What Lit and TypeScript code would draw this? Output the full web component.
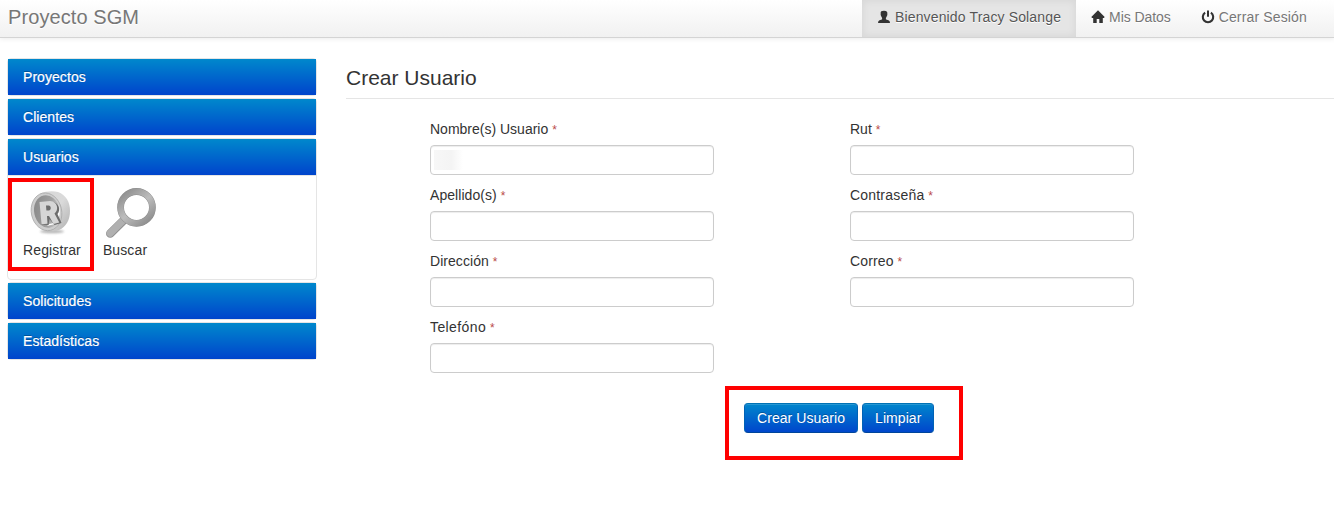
import { LitElement, html, css, svg } from "lit";
import { customElement } from "lit/decorators.js";
import { styleMap } from "lit/directives/style-map.js";

const userIcon = svg`<path fill="#333" d="M4.300 1.300Q5 .7 7 .7q2.300 0 2.900 1Q10.600 2.500 10.300 4q.3 1-.4 2Q9.500 7.300 8.900 7.900V9.200q.5.5 2.600 1.100Q13 10.900 13 13H1Q1 10.900 2.500 10.300q2.100-.6 2.600-1.100V7.900Q4.500 7.300 4.100 6 3.400 5 3.700 4 3.400 2 4.300 1.300z"/>`;
const homeIcon = svg`<path fill="#333" d="M7 .3 13.700 7 12.900 8H11.800v5H8.300V9H5.700v4H2.200V8H1.100L.3 7z"/>`;
const powerIcon = svg`<path fill="none" stroke="#333" stroke-width="2.100" d="M4.100 2.700A5.200 5.200 0 1 0 9.900 2.700"/><path fill="#333" d="M6 .6h2V6.800H6z"/>`;

@customElement("app-root")
export class AppRoot extends LitElement {
  static styles = css`
    :host { display: block; height: 506px; overflow: hidden; background: #fff; color: #333;
      font: 14px/20px "Liberation Sans", Arial, sans-serif; }
    * { box-sizing: border-box; }
    .navbar { height: 38px; display: flex; justify-content: space-between; padding: 0 12px 0 8px;
      background: linear-gradient(#fff, #f1f1f1); border-bottom: 1px solid #d4d4d4;
      box-shadow: 0 1px 5px rgba(0, 0, 0, .08); color: #777; text-shadow: 0 1px 0 #fff; }
    .brand { font-size: 20px; padding-top: 7px; letter-spacing: .09px; }
    .nav { display: flex; }
    .item { display: flex; gap: 4px; padding: 7px 15px 10px; white-space: nowrap; }
    .item svg { width: 14px; height: 14px; margin-top: 3px; }
    .active { color: #555; background: #e5e5e5; box-shadow: inset 0 0 8px rgba(0, 0, 0, .08); }
    .page { display: flex; padding: 20px 0 0 7px; gap: 29px; }
    .side { width: 310px; display: flex; flex-direction: column; gap: 2px; flex: none; }
    .group { border: 1px solid #e5e5e5; border-radius: 4px; }
    .head { height: 36px; padding: 8px 15px; color: #fff; background: linear-gradient(#08c, #04c);
      text-shadow: 0 -1px 0 rgba(0, 0, 0, .25); letter-spacing: .06px; -webkit-text-stroke: .2px #fff; }
    .inner { height: 104px; border-top: 1px solid #e5e5e5; display: flex; position: relative; padding: 9px 15px; gap: 22px; }
    .tool { display: flex; flex-direction: column; letter-spacing: .12px; }
    .tool svg { width: 56px; height: 55px; display: block; overflow: visible; }
    .mark { position: absolute; border: 4px solid #f00; }
    .m1 { left: 0; top: 2px; width: 86px; height: 93px; }
    .main { flex: 1; }
    .title { font-size: 21px; line-height: 40px; height: 41px; border-bottom: 1px solid #e5e5e5; }
    .form { display: grid; grid-template-columns: 284px 284px; column-gap: 136px; row-gap: 10px;
      padding: 20px 0 0 84px; }
    .label { height: 20px; margin-bottom: 6px; }
    .req { color: #b94a48; font-size: 11.9px; }
    .box { height: 30px; border: 1px solid #ccc; border-radius: 4px; box-shadow: inset 0 1px 1px rgba(0, 0, 0, .075); padding: 4px 3px; }
    .smudge { width: 29px; height: 20px; background: linear-gradient(90deg, #f7f7f7, #f4f4f4 60%, #fff); }
    .actions { display: flex; gap: 4px; margin: 30px 0 0 398px; position: relative; width: max-content; }
    .btn { font: inherit; color: #fff; height: 30px; padding: 4px 12px; border-radius: 4px; letter-spacing: .07px;
      border: 1px solid; border-color: #0072b5 #0062b5 #00459b; background: linear-gradient(#08c, #04c) border-box;
      text-shadow: 0 -1px 0 rgba(0, 0, 0, .25); box-shadow: inset 0 1px 0 rgba(255, 255, 255, .15); }
    .m2 { left: -19px; top: -17px; width: 238px; height: 74px; }
  `;

  private nav(icon: unknown, text: string, tracking: number, active = false) {
    return html`<div class="item ${active ? "active" : ""}"><svg viewBox="0 0 14 14">${icon}</svg><span style=${styleMap({ letterSpacing: `${tracking}px` })}>${text}</span></div>`;
  }

  private field(label: string, tracking = 0, filled = false) {
    return html`<div><div class="label"><span style=${styleMap({ letterSpacing: `${tracking}px` })}>${label}</span> <span class="req">*</span></div>
      <div class="box">${filled ? html`<div class="smudge"></div>` : null}</div></div>`;
  }

  private group(title: string, body: unknown = null) {
    return html`<div class="group"><div class="head">${title}</div>${body}</div>`;
  }

  private tools() {
    return html`<div class="inner">
      <div class="tool">
        <svg viewBox="0 0 56 55">
          <defs>
            <linearGradient id="rim" x1="0" y1="0" x2="1" y2="1"><stop stop-color="#d8d8d8"/><stop offset=".5" stop-color="#dadada"/><stop offset="1" stop-color="#b0b0b0"/></linearGradient>
            <linearGradient id="hole" x1="0" y1="0" x2="1" y2=".5"><stop stop-color="#858585"/><stop offset=".7" stop-color="#a0a0a0"/><stop offset="1" stop-color="#c8c8c8"/></linearGradient>
            <filter id="soft" x="-20%" y="-100%" width="140%" height="300%"><feGaussianBlur stdDeviation="1"/></filter>
          </defs>
          <ellipse cx="29" cy="46.500" rx="12" ry="1.800" fill="#888" opacity=".6" filter="url(#soft)"/>
          <path fill="url(#rim)" d="M17 8.500C23 6 30 5.500 35 7c8 3 12 10 12 19 0 9-4 16-11 19-3 1.300-7 1.500-10 .5z"/>
          <ellipse cx="23.500" cy="26.800" rx="15.200" ry="19" fill="#cdcdcd" stroke="#aaa" stroke-width=".8" transform="rotate(-12 23.500 26.800)"/>
          <ellipse cx="24" cy="26.500" rx="12.800" ry="16.300" fill="url(#hole)" transform="rotate(-12 24 26.500)"/>
          <path fill="#fff" d="M35.500 19c2.500 7 1.500 15-3.500 20l-8 2 2-2 10-2-4-7 4-5z"/>
          <path fill="#6c6c6c" d="M20 17h10c6 1 8 8 4.500 12l4 9-7 2-5-6-1 6-7-.5z"/>
          <path fill="#d6d6d6" fill-rule="evenodd" d="M16.500 17 27 16c8 .5 9 9 4.500 12.500l4.800 9L30.500 39 26 31h-2l.5 7.800-6 .5zM23 20.500l.4 5h2.800c2.300-.6 2-4.800-.5-5z"/>
        </svg>
        <span>Registrar</span>
      </div>
      <div class="tool">
        <svg viewBox="0 0 56 55">
          <defs>
            <linearGradient id="glass" x1=".1" y1="0" x2=".9" y2="1"><stop stop-color="#8e8e8e"/><stop offset=".5" stop-color="#bdbdbd"/><stop offset="1" stop-color="#8c8c8c"/></linearGradient>
          </defs>
          <path d="M19.500 36.500 7.300 48.500" stroke="#8f8f8f" stroke-width="8.600" stroke-linecap="round"/>
          <path d="M22 33.500 7.200 48.200" stroke="#b0b0b0" stroke-width="7.200" stroke-linecap="round"/>
          <circle cx="33.500" cy="22.400" r="15.900" fill="none" stroke="#8c8c8c" stroke-width="6.800"/>
          <circle cx="33.500" cy="22.400" r="15.900" fill="none" stroke="url(#glass)" stroke-width="6"/>
        </svg>
        <span>Buscar</span>
      </div>
      <div class="mark m1"></div>
    </div>`;
  }

  render() {
    return html`
      <div class="navbar"><div class="brand">Proyecto SGM</div>
        <div class="nav">${this.nav(userIcon, "Bienvenido Tracy Solange", 0.14, true)}${this.nav(homeIcon, "Mis Datos", -0.07)}${this.nav(powerIcon, "Cerrar Sesión", 0.15)}</div>
      </div>
      <div class="page">
        <div class="side">
          ${this.group("Proyectos")}${this.group("Clientes")}${this.group("Usuarios", this.tools())}${this.group("Solicitudes")}${this.group("Estadísticas")}
        </div>
        <div class="main">
          <div class="title">Crear Usuario</div>
          <div class="form">
            ${this.field("Nombre(s) Usuario", 0, true)}${this.field("Rut")}
            ${this.field("Apellido(s)", 0.06)}${this.field("Contraseña", 0.2)}
            ${this.field("Dirección", 0.05)}${this.field("Correo", 0.14)}
            ${this.field("Telefóno", 0.4)}
          </div>
          <div class="actions"><button class="btn">Crear Usuario</button><button class="btn">Limpiar</button><div class="mark m2"></div></div>
        </div>
      </div>`;
  }
}
